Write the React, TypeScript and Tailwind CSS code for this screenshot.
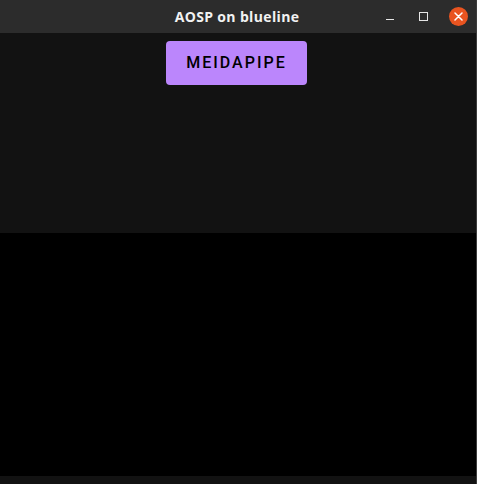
export default function App() {
  return (
    <div className="flex h-[484px] w-[477px] bg-black" style={{ fontFamily: "Roboto, 'Noto Sans', sans-serif" }}>
      <div className="flex w-[476px] flex-col">
        {/* title bar */}
        <div className="relative flex h-[33px] shrink-0 items-center justify-center bg-[#2c2c2c]">
          <span className="ml-[-2px] text-[14px] font-bold tracking-[0.35px] text-[#f2f2f2]" style={{ fontFamily: "'Open Sans', 'Noto Sans', sans-serif" }}>
            AOSP on blueline
          </span>
          <div className="absolute right-[8px] top-0 flex h-[33px] items-center">
            <div className="mr-[25px] mt-[6px] h-[1px] w-[8px] bg-[#e6e6e6]" />
            <div className="mr-[21px] h-[9px] w-[9px] border border-[#e6e6e6]" />
            <div className="flex h-[19px] w-[19px] items-center justify-center rounded-full bg-[#e95420]">
              <svg width="9" height="9" viewBox="0 0 9 9">
                <path d="M1 1L8 8M8 1L1 8" stroke="#fff" strokeWidth="1.5" strokeLinecap="round" />
              </svg>
            </div>
          </div>
        </div>
        {/* app surface */}
        <div className="flex h-[200px] shrink-0 justify-center bg-[#121212] pt-[8px]">
          <button className="-ml-[3px] h-[44px] w-[141px] rounded-[4px] bg-[#bb86fc] text-[16px] font-medium tracking-[2px] text-black">
            MEIDAPIPE
          </button>
        </div>
        <div className="flex-1 bg-black" />
        <div className="h-[8px] shrink-0 bg-[#121212]" />
      </div>
      <div className="w-[1px] bg-[#3c3c3c]" />
    </div>
  );
}
